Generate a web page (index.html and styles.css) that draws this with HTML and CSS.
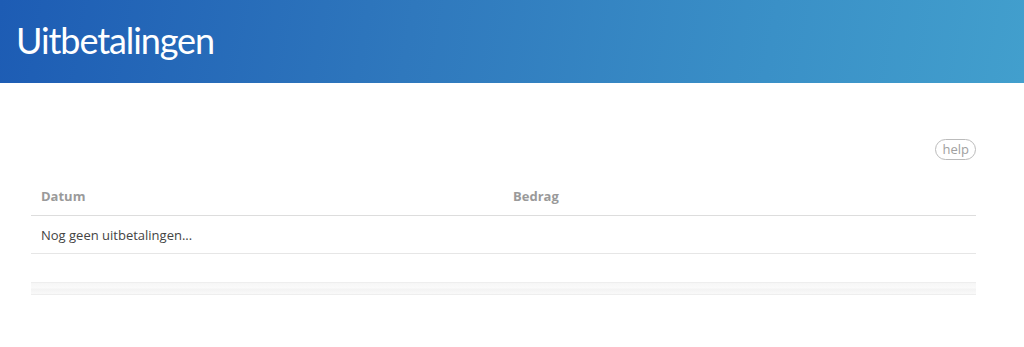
FILE: index.html
```html
<!DOCTYPE html>
<html lang="nl">
<head>
<meta charset="utf-8">
<title>Uitbetalingen</title>
<link rel="stylesheet" href="styles.css">
</head>
<body>
<header class="page-header">
  <h1 class="page-title">Uitbetalingen</h1>
</header>
<main class="content">
  <div class="toolbar">
    <button class="help-btn">help</button>
  </div>
  <div class="table">
    <div class="row head">
      <div class="cell col-date">Datum</div>
      <div class="cell col-amount">Bedrag</div>
    </div>
    <div class="row body-row">
      <div class="cell">Nog geen uitbetalingen...</div>
    </div>
    <div class="spacer"></div>
    <div class="foot"></div>
  </div>
</main>
</body>
</html>
```
FILE: styles.css
```css
* { box-sizing: border-box; }
html, body { margin: 0; padding: 0; background: #fff; }
body { font-family: "Open Sans", "Liberation Sans", sans-serif; color: #444; }

.page-header {
  height: 83px;
  background: linear-gradient(100deg, #1d5cb4 0%, #2f78bd 40%, #3a90c7 75%, #429fcd 100%);
  display: flex;
  align-items: center;
  padding-left: 16px;
}
.page-title {
  margin: 0;
  margin-top: -3px;
  font-family: "Lato", "Noto Sans", sans-serif;
  font-weight: 400;
  font-size: 36px;
  color: #fff;
  letter-spacing: -1.1px;
}

.content { padding: 56px 48px 0 31px; }

.toolbar { display: flex; justify-content: flex-end; }
.help-btn {
  font-family: "Open Sans", "Liberation Sans", sans-serif;
  font-size: 13px;
  color: #a0a0a0;
  background: #fff;
  border: 1px solid #bbb;
  border-radius: 11px;
  height: 21px;
  padding: 0 6px;
  line-height: 19px;
}

.table { margin-top: 16px; }
.row { display: flex; border-bottom: 1px solid #ddd; }
.cell { padding: 0 10px; font-size: 13px; }
.head { height: 40px; align-items: center; }
.head .cell { font-weight: 700; color: #9a9a9a; }
.col-date { width: 472px; }
.body-row { height: 38px; align-items: center; border-bottom-color: #e6e6e6; }
.body-row .cell { color: #444; }
.spacer { height: 28px; }
.foot {
  height: 13px;
  background: linear-gradient(#f6f6f6 0%, #fafafa 45%, #f3f3f3 55%, #f9f9f9 100%);
  border-top: 1px solid #eee;
  border-bottom: 1px solid #eee;
}
```
